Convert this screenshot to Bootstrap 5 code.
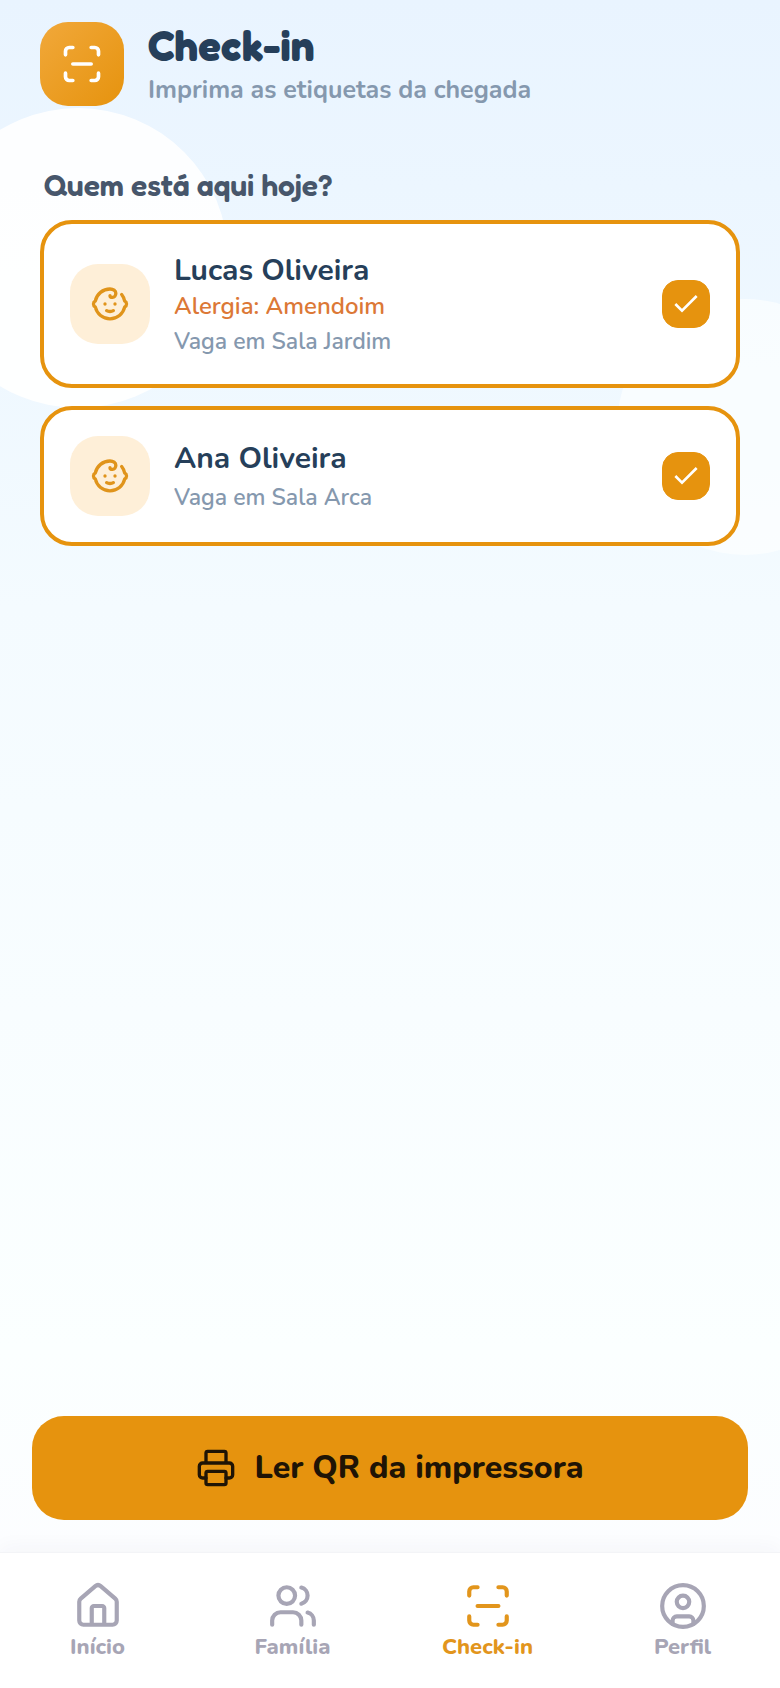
<!DOCTYPE html>
<html lang="pt-BR">
<head>
<meta charset="utf-8">
<meta name="viewport" content="width=device-width, initial-scale=1">
<title>Check-in</title>
<link href="https://cdn.jsdelivr.net/npm/bootstrap@5.3.0/dist/css/bootstrap.min.css" rel="stylesheet">
<style>
:root { --amber: #e6930e; --navy: #263f5a; --slate: #8598ae; --nav-gray: #a7a5b5; }
body {
  font-family: Nunito, Lato, "Open Sans", sans-serif;
  color: var(--navy);
  background: linear-gradient(180deg, #e9f4ff 0, #eff8ff 22%, #f4fbff 36%, #f8fdff 60%, #fbffff 80%, #fcfdff 92%);
}
.screen { position: relative; overflow: hidden; }
.cloud { position: absolute; border-radius: 50%; z-index: 0; }
.cloud-left { width: 300px; height: 300px; left: -72px; top: 108px; background: rgba(255, 255, 255, .9); }
.cloud-right { width: 256px; height: 256px; right: -93px; top: 299px; background: rgba(253, 255, 255, .65); }
.layer { position: relative; z-index: 1; }
.stroke-icon { fill: none; stroke: currentColor; stroke-width: 2; stroke-linecap: round; stroke-linejoin: round; flex: none; display: block; }
.page-head { padding: 22px 40px 0; gap: 24px; }
.brand-tile { width: 84px; height: 84px; border-radius: 28px; color: #fff; background: linear-gradient(135deg, #f1a83a, #e6930e); }
.title { font-family: Fredoka, Lato, sans-serif; font-weight: 700; font-size: 42px; line-height: 48px; }
.subtitle { font-weight: 700; font-size: 25px; line-height: 32px; color: var(--slate); margin-top: 4px; }
.content { padding: 62px 40px 32px; }
.question { font-family: Fredoka, Lato, sans-serif; font-weight: 600; font-size: 30px; line-height: 34px; color: #47566b; padding-left: 4px; margin-bottom: 18px; }
.children { gap: 18px; }
.child-card { border: 4px solid var(--amber); border-radius: 32px; padding: 26px; gap: 24px; background: #fff; cursor: pointer; }
.avatar { width: 80px; height: 80px; border-radius: 28px; background: #feefd8; color: #e0941b; }
.child-info { padding-top: 2px; }
.child-name { font-weight: 700; font-size: 30px; line-height: 38px; }
.child-alert { font-weight: 600; font-size: 24px; line-height: 32px; color: #dc7836; }
.child-room { font-weight: 600; font-size: 23px; line-height: 32px; color: var(--slate); margin-top: 4px; }
.form-check-input.pick { width: 48px; height: 48px; border-radius: 16px; border-color: #d5dce5; }
.form-check-input.pick:checked {
  background-color: var(--amber); border-color: var(--amber);
  background-size: 32px 32px;
  background-image: url("data:image/svg+xml,%3Csvg xmlns='http://www.w3.org/2000/svg' viewBox='0 0 24 24'%3E%3Cpath fill='none' stroke='%23fff' stroke-width='2' d='M20 6 9 17l-5-5'/%3E%3C/svg%3E");
}
.action { padding: 0 32px 32px; }
.btn-scan { --bs-btn-bg: #e6930e; --bs-btn-color: #1f1405; --bs-btn-hover-bg: #d4860a; --bs-btn-hover-color: #1f1405; --bs-btn-active-bg: #c67d08; height: 104px; border: 0; border-radius: 32px; gap: 18px; font-weight: 800; font-size: 32px; line-height: 40px; }
.tabs { background: #fff; border-top: 1px solid #f3f4f7; box-shadow: 0 -4px 20px rgba(40, 50, 70, .04); padding: 28px 0 25px; }
.tab-link { color: var(--nav-gray); text-decoration: none; font-weight: 800; font-size: 22px; line-height: 32px; }
.tab-link.current { color: #e2951c; }
</style>
</head>
<body>
<div class="screen min-vh-100 d-flex flex-column">
  <div class="cloud cloud-left"></div>
  <div class="cloud cloud-right"></div>

  <header class="page-head layer d-flex align-items-center">
    <div class="brand-tile d-flex align-items-center justify-content-center flex-shrink-0">
      <svg class="stroke-icon" width="44" height="44" viewBox="0 0 24 24" aria-hidden="true"><path d="M3 7V5a2 2 0 0 1 2-2h2M17 3h2a2 2 0 0 1 2 2v2M21 17v2a2 2 0 0 1-2 2h-2M7 21H5a2 2 0 0 1-2-2v-2M7 12h10"/></svg>
    </div>
    <div>
      <h1 class="title mb-0">Check-in</h1>
      <p class="subtitle mb-0">Imprima as etiquetas da chegada</p>
    </div>
  </header>

  <main class="content layer flex-grow-1">
    <h2 class="question">Quem está aqui hoje?</h2>
    <div class="children d-flex flex-column">
      <label class="child-card d-flex align-items-center" for="lucas">
        <span class="avatar d-flex align-items-center justify-content-center flex-shrink-0">
          <svg class="stroke-icon" width="40" height="40" viewBox="0 0 24 24" aria-hidden="true"><path d="M9 12h.01M15 12h.01M10 16c.5.3 1.2.5 2 .5s1.5-.2 2-.5M19 6.3a9 9 0 0 1 1.8 3.9 2 2 0 0 1 0 3.6 9 9 0 0 1-17.6 0 2 2 0 0 1 0-3.6A9 9 0 0 1 12 3c2 0 3.5 1.1 3.5 2.5s-.9 2.5-2 2.5c-.8 0-1.5-.4-1.5-1"/></svg>
        </span>
        <span class="child-info flex-grow-1">
          <span class="child-name d-block">Lucas Oliveira</span>
          <span class="child-alert d-block">Alergia: Amendoim</span>
          <span class="child-room d-block">Vaga em Sala Jardim</span>
        </span>
        <input class="form-check-input pick m-0 flex-shrink-0" type="checkbox" id="lucas" checked>
      </label>
      <label class="child-card d-flex align-items-center" for="ana">
        <span class="avatar d-flex align-items-center justify-content-center flex-shrink-0">
          <svg class="stroke-icon" width="40" height="40" viewBox="0 0 24 24" aria-hidden="true"><path d="M9 12h.01M15 12h.01M10 16c.5.3 1.2.5 2 .5s1.5-.2 2-.5M19 6.3a9 9 0 0 1 1.8 3.9 2 2 0 0 1 0 3.6 9 9 0 0 1-17.6 0 2 2 0 0 1 0-3.6A9 9 0 0 1 12 3c2 0 3.5 1.1 3.5 2.5s-.9 2.5-2 2.5c-.8 0-1.5-.4-1.5-1"/></svg>
        </span>
        <span class="child-info flex-grow-1">
          <span class="child-name d-block">Ana Oliveira</span>
          <span class="child-room d-block">Vaga em Sala Arca</span>
        </span>
        <input class="form-check-input pick m-0 flex-shrink-0" type="checkbox" id="ana" checked>
      </label>
    </div>
  </main>

  <div class="action layer">
    <button type="button" class="btn btn-scan w-100 d-flex align-items-center justify-content-center">
      <svg class="stroke-icon" width="40" height="40" viewBox="0 0 24 24" aria-hidden="true"><path d="M6 18H4a2 2 0 0 1-2-2v-5a2 2 0 0 1 2-2h16a2 2 0 0 1 2 2v5a2 2 0 0 1-2 2h-2M6 9V3a1 1 0 0 1 1-1h10a1 1 0 0 1 1 1v6"/><rect x="6" y="14" width="12" height="8" rx="1"/></svg>
      <span>Ler QR da impressora</span>
    </button>
  </div>

  <nav class="tabs layer" aria-label="Principal">
    <div class="row g-0">
      <a href="#inicio" class="tab-link col d-flex flex-column align-items-center">
        <svg class="stroke-icon" width="50" height="50" viewBox="0 0 24 24" aria-hidden="true"><path d="M15 21v-8a1 1 0 0 0-1-1h-4a1 1 0 0 0-1 1v8M3 10a2 2 0 0 1 .709-1.528l7-5.999a2 2 0 0 1 2.582 0l7 5.999A2 2 0 0 1 21 10v9a2 2 0 0 1-2 2H5a2 2 0 0 1-2-2z"/></svg>
        <span>Início</span>
      </a>
      <a href="#familia" class="tab-link col d-flex flex-column align-items-center">
        <svg class="stroke-icon" width="50" height="50" viewBox="0 0 24 24" aria-hidden="true"><path d="M16 21v-2a4 4 0 0 0-4-4H6a4 4 0 0 0-4 4v2M22 21v-2a4 4 0 0 0-3-3.87M16 3.13a4 4 0 0 1 0 7.75"/><circle cx="9" cy="7" r="4"/></svg>
        <span>Família</span>
      </a>
      <a href="#checkin" class="tab-link current col d-flex flex-column align-items-center" aria-current="page">
        <svg class="stroke-icon" width="50" height="50" viewBox="0 0 24 24" aria-hidden="true"><path d="M3 7V5a2 2 0 0 1 2-2h2M17 3h2a2 2 0 0 1 2 2v2M21 17v2a2 2 0 0 1-2 2h-2M7 21H5a2 2 0 0 1-2-2v-2M7 12h10"/></svg>
        <span>Check-in</span>
      </a>
      <a href="#perfil" class="tab-link col d-flex flex-column align-items-center">
        <svg class="stroke-icon" width="50" height="50" viewBox="0 0 24 24" aria-hidden="true"><circle cx="12" cy="12" r="10"/><circle cx="12" cy="10" r="3"/><path d="M7 20.662V19a2 2 0 0 1 2-2h6a2 2 0 0 1 2 2v1.662"/></svg>
        <span>Perfil</span>
      </a>
    </div>
  </nav>
</div>
<script src="https://cdn.jsdelivr.net/npm/bootstrap@5.3.0/dist/js/bootstrap.bundle.min.js"></script>
</body>
</html>
